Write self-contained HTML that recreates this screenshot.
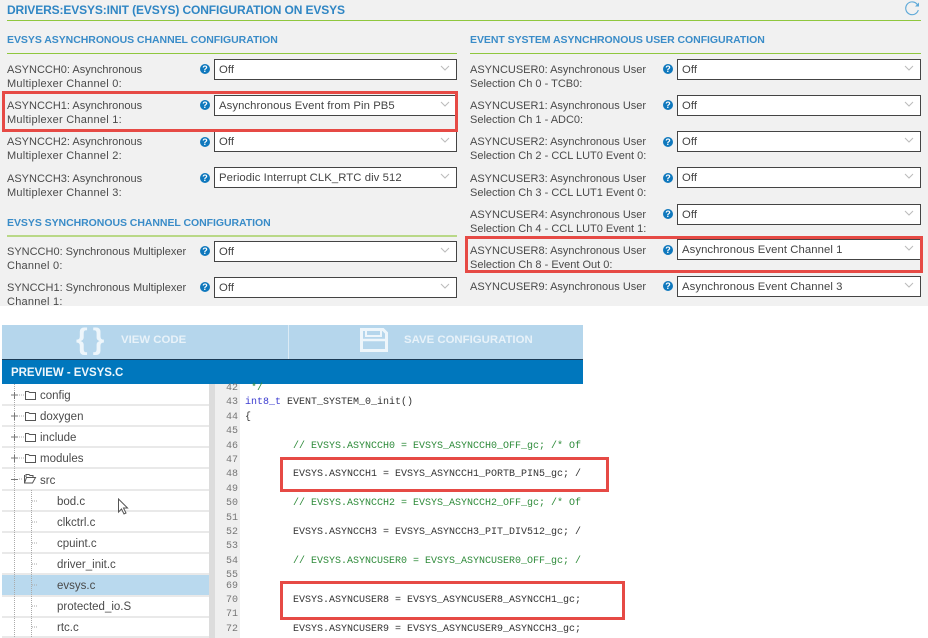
<!DOCTYPE html>
<html><head><meta charset="utf-8"><style>
html,body{margin:0;padding:0;background:#fff}
#p{position:relative;width:928px;height:638px;overflow:hidden;background:#fff;font-family:"Liberation Sans",sans-serif}
#p div,#p svg{position:absolute}
.t{white-space:nowrap}
.h1{color:#2f86c4;font-size:12px;font-weight:bold;line-height:16px;letter-spacing:-.12px}
.h2{color:#3a8cc8;font-size:10.5px;font-weight:bold;line-height:14px;letter-spacing:-.05px}
.g{height:1px;background:#8fc73e}
.l{color:#4a4a4a;font-size:11px;line-height:14.4px;white-space:nowrap;margin-top:1px}
.l span{letter-spacing:.25px}
.s{box-sizing:border-box;height:21px;background:#fff;border:1px solid #444;color:#444;font-size:11.3px;line-height:19px;padding:1px 0 0 4px;white-space:nowrap;letter-spacing:.08px}
.s svg{right:6px;top:5px}
.q{width:10px;height:10px;border-radius:50%;background:#0f78bd;color:#fff;font-size:9px;font-weight:bold;line-height:10px;text-align:center}
.n{left:215px;width:23px;text-align:right;color:#777;font:10px/14px "Liberation Mono",monospace}
.c{left:245px;font:10px/14px "Liberation Mono",monospace;color:#333;white-space:pre}
.gr{color:#2e8b3a}
.r{box-sizing:border-box;border:3px solid #e64a45}
.sep{left:2px;width:207px;height:2px;background:#e9e9e9}
.f{color:#4a4a4a;font-size:11.5px;line-height:14px;white-space:nowrap}
</style></head><body><div id="p">

<div style="left:0;top:0;width:928px;height:306px;background:#f1f1f1"></div>
<div class="t h1" style="left:7px;top:2px">DRIVERS:EVSYS:INIT (EVSYS) CONFIGURATION ON EVSYS</div>
<div class="g" style="left:7px;top:20px;width:914px"></div>
<svg style="left:904px;top:1px" width="16" height="15" viewBox="0 0 16 15"><path d="M13.5 3.8A6.4 6.4 0 1 0 14.3 9" fill="none" stroke="#5ea9d8" stroke-width="1.1"/><path d="M15 1.5v4h-4z" fill="#5ea9d8"/></svg>

<div class="t h2" style="left:7px;top:33px">EVSYS ASYNCHRONOUS CHANNEL CONFIGURATION</div>
<div class="g" style="left:7px;top:53px;width:450px"></div>
<div class="t h2" style="left:470px;top:33px">EVENT SYSTEM ASYNCHRONOUS USER CONFIGURATION</div>
<div class="g" style="left:470px;top:53px;width:451px"></div>

<!-- left column -->
<div class="l" style="left:7px;top:62px">ASYNCCH0: Asynchronous<br><span>Multiplexer Channel 0:</span></div>
<div class="q" style="left:200px;top:64px">?</div>
<div class="s" style="left:214px;top:59px;width:243px">Off<svg width="10" height="6" viewBox="0 0 10 6"><path d="M1 1l4 4 4-4" fill="none" stroke="#bbb"/></svg></div>

<div class="l" style="left:7px;top:98px">ASYNCCH1: Asynchronous<br><span>Multiplexer Channel 1:</span></div>
<div class="q" style="left:200px;top:100px">?</div>
<div class="s" style="left:214px;top:95px;width:243px">Asynchronous Event from Pin PB5<svg width="10" height="6" viewBox="0 0 10 6"><path d="M1 1l4 4 4-4" fill="none" stroke="#bbb"/></svg></div>

<div class="l" style="left:7px;top:134px">ASYNCCH2: Asynchronous<br><span>Multiplexer Channel 2:</span></div>
<div class="q" style="left:200px;top:137px">?</div>
<div class="s" style="left:214px;top:131px;width:243px">Off<svg width="10" height="6" viewBox="0 0 10 6"><path d="M1 1l4 4 4-4" fill="none" stroke="#bbb"/></svg></div>

<div class="l" style="left:7px;top:171px">ASYNCCH3: Asynchronous<br><span>Multiplexer Channel 3:</span></div>
<div class="q" style="left:200px;top:173px">?</div>
<div class="s" style="left:214px;top:167px;width:243px">Periodic Interrupt CLK_RTC div 512<svg width="10" height="6" viewBox="0 0 10 6"><path d="M1 1l4 4 4-4" fill="none" stroke="#bbb"/></svg></div>

<div class="t h2" style="left:7px;top:216px">EVSYS SYNCHRONOUS CHANNEL CONFIGURATION</div>
<div style="left:7px;top:235px;width:450px;height:2px;background:#b9d887"></div>

<div class="l" style="left:7px;top:244px">SYNCCH0: Synchronous Multiplexer<br><span>Channel 0:</span></div>
<div class="q" style="left:200px;top:246px">?</div>
<div class="s" style="left:214px;top:241px;width:243px">Off<svg width="10" height="6" viewBox="0 0 10 6"><path d="M1 1l4 4 4-4" fill="none" stroke="#bbb"/></svg></div>

<div class="l" style="left:7px;top:280px">SYNCCH1: Synchronous Multiplexer<br><span>Channel 1:</span></div>
<div class="q" style="left:200px;top:282px">?</div>
<div class="s" style="left:214px;top:277px;width:243px">Off<svg width="10" height="6" viewBox="0 0 10 6"><path d="M1 1l4 4 4-4" fill="none" stroke="#bbb"/></svg></div>

<!-- right column -->
<div class="l" style="left:470px;top:62px">ASYNCUSER0: Asynchronous User<br>Selection Ch 0 - TCB0:</div>
<div class="q" style="left:663px;top:64px">?</div>
<div class="s" style="left:677px;top:59px;width:244px">Off<svg width="10" height="6" viewBox="0 0 10 6"><path d="M1 1l4 4 4-4" fill="none" stroke="#bbb"/></svg></div>

<div class="l" style="left:470px;top:98px">ASYNCUSER1: Asynchronous User<br>Selection Ch 1 - ADC0:</div>
<div class="q" style="left:663px;top:100px">?</div>
<div class="s" style="left:677px;top:95px;width:244px">Off<svg width="10" height="6" viewBox="0 0 10 6"><path d="M1 1l4 4 4-4" fill="none" stroke="#bbb"/></svg></div>

<div class="l" style="left:470px;top:134px">ASYNCUSER2: Asynchronous User<br>Selection Ch 2 - CCL LUT0 Event 0:</div>
<div class="q" style="left:663px;top:137px">?</div>
<div class="s" style="left:677px;top:131px;width:244px">Off<svg width="10" height="6" viewBox="0 0 10 6"><path d="M1 1l4 4 4-4" fill="none" stroke="#bbb"/></svg></div>

<div class="l" style="left:470px;top:171px">ASYNCUSER3: Asynchronous User<br>Selection Ch 3 - CCL LUT1 Event 0:</div>
<div class="q" style="left:663px;top:173px">?</div>
<div class="s" style="left:677px;top:167px;width:244px">Off<svg width="10" height="6" viewBox="0 0 10 6"><path d="M1 1l4 4 4-4" fill="none" stroke="#bbb"/></svg></div>

<div class="l" style="left:470px;top:207px">ASYNCUSER4: Asynchronous User<br>Selection Ch 4 - CCL LUT0 Event 1:</div>
<div class="q" style="left:663px;top:209px">?</div>
<div class="s" style="left:677px;top:204px;width:244px">Off<svg width="10" height="6" viewBox="0 0 10 6"><path d="M1 1l4 4 4-4" fill="none" stroke="#bbb"/></svg></div>

<div class="l" style="left:470px;top:243px">ASYNCUSER8: Asynchronous User<br>Selection Ch 8 - Event Out 0:</div>
<div class="q" style="left:663px;top:245px">?</div>
<div class="s" style="left:677px;top:239px;width:244px">Asynchronous Event Channel 1<svg width="10" height="6" viewBox="0 0 10 6"><path d="M1 1l4 4 4-4" fill="none" stroke="#bbb"/></svg></div>

<div class="l" style="left:470px;top:279px">ASYNCUSER9: Asynchronous User</div>
<div class="q" style="left:663px;top:281px">?</div>
<div class="s" style="left:677px;top:276px;width:244px">Asynchronous Event Channel 3<svg width="10" height="6" viewBox="0 0 10 6"><path d="M1 1l4 4 4-4" fill="none" stroke="#bbb"/></svg></div>

<div class="r" style="left:2px;top:91px;width:456px;height:41px"></div>
<div class="r" style="left:465px;top:236px;width:458px;height:37px"></div>

<!-- toolbar -->
<div style="left:2px;top:325px;width:581px;height:34px;background:#b5d6ec"></div>
<div style="left:288px;top:325px;width:1px;height:34px;background:#dcebf5"></div>
<div class="t" style="left:76px;top:322px;color:#eef6fb;font-size:30px;line-height:36px;font-weight:bold;letter-spacing:5px">{}</div>
<div class="t" style="left:121px;top:332px;color:#e8f2f9;font-size:11.4px;line-height:16px;font-weight:bold">VIEW CODE</div>
<svg style="left:360px;top:328px" width="28" height="24" viewBox="0 0 28 24"><path d="M1.5 1.5H23L26.5 5V22.5H1.5Z" fill="none" stroke="#eef6fb" stroke-width="3"/><path d="M6 1.5H21V8H6Z" fill="none" stroke="#eef6fb" stroke-width="2"/><path d="M1.5 12H26.5" stroke="#eef6fb" stroke-width="2.5"/></svg>
<div class="t" style="left:404px;top:332px;color:#e8f2f9;font-size:11.4px;line-height:16px;font-weight:bold">SAVE CONFIGURATION</div>

<div style="left:2px;top:359px;width:581px;height:25px;background:#0077bd;border-top:1px solid #1a3a55;box-sizing:border-box"></div>
<div class="t" style="left:11px;top:365px;color:#f0f7fb;font-size:11.5px;line-height:16px;font-weight:bold;letter-spacing:-.05px">PREVIEW - EVSYS.C</div>

<!-- tree -->
<div style="left:2px;top:574px;width:207px;height:22px;background:#b9d9ee"></div>
<div class="sep" style="top:404px"></div>
<div class="sep" style="top:425px"></div>
<div class="sep" style="top:446px"></div>
<div class="sep" style="top:467px"></div>
<div class="sep" style="top:489px"></div>
<div class="sep" style="top:510px"></div>
<div class="sep" style="top:531px"></div>
<div class="sep" style="top:552px"></div>
<div class="sep" style="top:573px"></div>
<div class="sep" style="top:595px"></div>
<div class="sep" style="top:616px"></div>
<div class="sep" style="top:636px"></div>

<svg style="left:0;top:384px" width="60" height="254" viewBox="0 0 60 254">
<g stroke="#aaa" fill="none" stroke-dasharray="1 1">
<path d="M14.5 0V254M31.5 106V254"/>
<path d="M19 11h6M19 32h6M19 53h6M19 74h6M19 95h4"/>
<path d="M32 117h6M32 138h6M32 159h6M32 180h6M32 201h6M32 222h6M32 243h6"/>
</g>
<g stroke="#777" fill="none">
<path d="M11 11h7M14.500 8v7M11 32h7M14.500 29v7M11 53h7M14.500 50v7M11 74h7M14.500 71v7M11 95.500h7"/>
</g>
<g stroke="#555" fill="none" stroke-width="1">
<path d="M25.500 7.500v8h10v-7h-6l-1-1z"/>
<path d="M25.500 28.500v8h10v-7h-6l-1-1z"/>
<path d="M25.500 49.500v8h10v-7h-6l-1-1z"/>
<path d="M25.500 70.500v8h10v-7h-6l-1-1z"/>
<path d="M24.500 91v8h8l3-5.500h-9l-2 5.500M26 93v-2.500h3l1 1h3v2"/>
</g>
</svg>
<div class="f" style="left:40px;top:389px">config</div>
<div class="f" style="left:40px;top:410px">doxygen</div>
<div class="f" style="left:40px;top:431px">include</div>
<div class="f" style="left:40px;top:452px">modules</div>
<div class="f" style="left:40px;top:474px">src</div>
<div class="f" style="left:57px;top:495px">bod.c</div>
<div class="f" style="left:57px;top:516px">clkctrl.c</div>
<div class="f" style="left:57px;top:537px">cpuint.c</div>
<div class="f" style="left:57px;top:558px">driver_init.c</div>
<div class="f" style="left:57px;top:579px">evsys.c</div>
<div class="f" style="left:57px;top:600px">protected_io.S</div>
<div class="f" style="left:57px;top:621px">rtc.c</div>

<svg style="left:117px;top:498px" width="12" height="18" viewBox="0 0 12 18"><path d="M1.500 1v13l3-3 2.500 5 2-1-2.500-5h4z" fill="#fff" stroke="#555"/></svg>

<!-- gutter -->
<div style="left:209px;top:384px;width:6px;height:254px;background:#dcdcdc"></div>
<div style="left:215px;top:384px;width:25px;height:254px;background:#efefef"></div>
<div class="n" style="top:382px">42</div>
<div class="n" style="top:396px">43</div>
<div class="n" style="top:411px">44</div>
<div class="n" style="top:425px">45</div>
<div class="n" style="top:440px">46</div>
<div class="n" style="top:454px">47</div>
<div class="n" style="top:468px">48</div>
<div class="n" style="top:483px">49</div>
<div class="n" style="top:497px">50</div>
<div class="n" style="top:512px">51</div>
<div class="n" style="top:526px">52</div>
<div class="n" style="top:540px">53</div>
<div class="n" style="top:555px">54</div>
<div class="n" style="top:569px">55</div>
<div class="n" style="top:580px">69</div>
<div class="n" style="top:594px">70</div>
<div class="n" style="top:608px">71</div>
<div class="n" style="top:623px">72</div>

<!-- code -->
<div class="c gr" style="top:382px"> */</div>
<div class="c" style="top:396px"><span style="color:#3b3bd0">int8_t</span> EVENT_SYSTEM_0_init()</div>
<div class="c" style="top:411px">{</div>
<div class="c gr" style="left:293px;top:440px">// EVSYS.ASYNCCH0 = EVSYS_ASYNCCH0_OFF_gc; /* Of</div>
<div class="c" style="left:293px;top:468px">EVSYS.ASYNCCH1 = EVSYS_ASYNCCH1_PORTB_PIN5_gc; /</div>
<div class="c gr" style="left:293px;top:497px">// EVSYS.ASYNCCH2 = EVSYS_ASYNCCH2_OFF_gc; /* Of</div>
<div class="c" style="left:293px;top:526px">EVSYS.ASYNCCH3 = EVSYS_ASYNCCH3_PIT_DIV512_gc; /</div>
<div class="c gr" style="left:293px;top:555px">// EVSYS.ASYNCUSER0 = EVSYS_ASYNCUSER0_OFF_gc; /</div>
<div class="c" style="left:293px;top:594px">EVSYS.ASYNCUSER8 = EVSYS_ASYNCUSER8_ASYNCCH1_gc;</div>
<div class="c" style="left:293px;top:623px">EVSYS.ASYNCUSER9 = EVSYS_ASYNCUSER9_ASYNCCH3_gc;</div>

<div class="r" style="left:280px;top:457px;width:329px;height:35px"></div>
<div class="r" style="left:280px;top:581px;width:345px;height:39px"></div>
</div></body></html>
